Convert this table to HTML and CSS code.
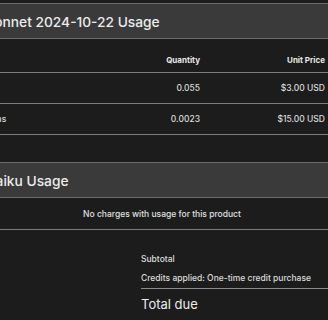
FILE: index.html
```html
<!DOCTYPE html>
<html>
  <head>
    <meta charset="UTF-8" />
    <meta name="viewport" content="width=device-width, initial-scale=1.0" />
    <title>Invoice usage</title>
    <link rel="stylesheet" href="styles.css">
  </head>
  <body>
    <div class="invoice">
      <div class="usage-section">
        <div class="usage-title">Claude 3.5 Sonnet 2024-10-22 Usage</div>
        <div class="usage-row usage-head">
          <div class="cell-desc">Description</div>
          <div class="cell-num">Quantity</div>
          <div class="cell-num">Unit Price</div>
          <div class="cell-num">Amount</div>
        </div>
        <div class="usage-row">
          <div class="cell-desc">Input tokens</div>
          <div class="cell-num">0.055</div>
          <div class="cell-num">$3.00 USD</div>
          <div class="cell-num">$0.17 USD</div>
        </div>
        <div class="usage-row">
          <div class="cell-desc">Output tokens</div>
          <div class="cell-num">0.0023</div>
          <div class="cell-num">$15.00 USD</div>
          <div class="cell-num">$0.03 USD</div>
        </div>
      </div>

      <div class="usage-section">
        <div class="usage-title">Claude 3.5 Haiku Usage</div>
        <div class="usage-empty">No charges with usage for this product</div>
      </div>

      <div class="totals">
        <div class="totals-row">
          <span>Subtotal</span>
          <span>$0.20 USD</span>
        </div>
        <div class="totals-row totals-credit">
          <span>Credits applied: One-time credit purchase</span>
          <span>-$0.20 USD</span>
        </div>
        <div class="totals-row totals-due">
          <span>Total due</span>
          <span>$0.00 USD</span>
        </div>
      </div>
    </div>
  </body>
</html>
```

FILE: styles.css
```css
* {
  box-sizing: border-box;
  margin: 0;
  padding: 0;
}

body {
  font-family: Inter, 'Noto Sans', Arial, sans-serif;
  background-color: #1c1c1c;
  color: #e6e6e6;
  overflow: hidden;
}

/* page is wider than the window, we only see a slice of it */
.invoice {
  width: 560px;
  margin-left: -100px;
  padding-top: 3px;
}

.usage-section {
  margin-bottom: 27px;
}

.usage-title {
  height: 36px;
  padding: 1px 0 0 11px;
  background-color: #3a3a3a;
  border-top: 1px solid #6c6c6c;
  border-bottom: 1px solid #6c6c6c;
  font-size: 13.75px;
  font-weight: 500;
  line-height: 34px;
  color: #ececec;
}

.usage-row {
  display: grid;
  grid-template-columns: 1fr 90px 125px 118px;
  align-items: center;
  height: 31px;
  padding: 0 17px 0 49px;
  border-bottom: 1px solid #7d7d7d;
  font-size: 8.5px;
  font-weight: 500;
  color: #dcdcdc;
}

.usage-head {
  height: 34px;
  padding-top: 8px;
  font-size: 8px;
  font-weight: 700;
  color: #e8e8e8;
}

.cell-num {
  text-align: right;
}

.usage-empty {
  height: 32px;
  border-bottom: 1px solid #7d7d7d;
  padding: 1px 36px 0 0;
  text-align: center;
  font-size: 8.5px;
  font-weight: 500;
  line-height: 31px;
  color: #e0e0e0;
}

.totals {
  margin-left: 241px;
  margin-top: -7px;
}

.totals-row {
  display: flex;
  justify-content: space-between;
  padding-right: 15px;
  font-size: 8.5px;
  font-weight: 500;
  line-height: 19px;
  color: #dcdcdc;
}

.totals-credit {
  border-bottom: 1px solid #8a8a8a;
}

.totals-due {
  padding-top: 5px;
  font-size: 13px;
  font-weight: 400;
  line-height: 20px;
  color: #ececec;
}
```
